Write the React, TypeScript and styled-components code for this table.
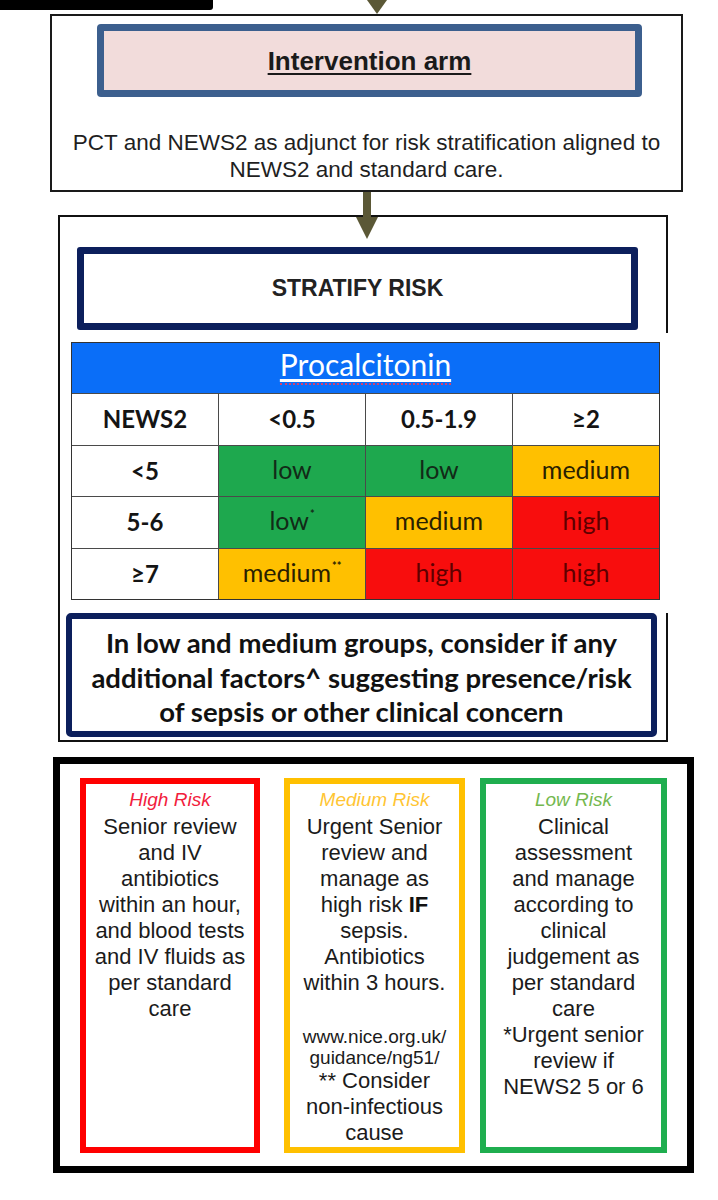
import React from 'react';
import styled, { createGlobalStyle } from 'styled-components';

const GlobalStyle = createGlobalStyle`
  html, body {
    margin: 0;
    padding: 0;
    background: #fff;
  }
  body {
    font-family: 'Liberation Sans', Arial, sans-serif;
    color: #1e1e1e;
  }
`;

const ARROW = '#5b5836';
const NAVY = '#0c1f5c';

type Tone = 'head' | 'white' | 'low' | 'medium' | 'high';

const toneBg: Record<Tone, string> = {
  head: '#0a6ef8',
  white: '#ffffff',
  low: '#1ea84e',
  medium: '#ffc000',
  high: '#f80d0d',
};

const toneInk: Record<Tone, string> = {
  head: '#ffffff',
  white: '#141414',
  low: '#122a17',
  medium: '#2a2100',
  high: '#5e0000',
};

const Page = styled.div`
  width: 718px;
  height: 1200px;
  overflow: hidden;
  background: #fff;
`;

const TopStrip = styled.div`
  display: flex;
  align-items: flex-start;
  height: 14px;
`;

const CutBar = styled.div`
  width: 213px;
  height: 10px;
  background: #000;
  border-bottom-right-radius: 3px;
`;

const TopArrow = styled.svg`
  display: block;
  margin-left: 154px;
`;

const IntroBox = styled.section`
  box-sizing: border-box;
  margin-left: 50px;
  width: 633px;
  height: 178px;
  border: 2px solid #1a1a1a;
  display: flex;
  flex-direction: column;
`;

const ArmHeader = styled.div`
  box-sizing: border-box;
  margin: 8px 39px 0 45px;
  height: 73px;
  border: 7px solid #3c5f8e;
  border-radius: 4px;
  background: #f2dcdb;
  display: flex;
  align-items: center;
  justify-content: center;
  padding-top: 2px;
  font-size: 26px;
  font-weight: 700;
  text-decoration: underline;
  text-underline-offset: 3px;
  color: #1a1a1a;
`;

const IntroText = styled.p`
  margin: 32px 0 0;
  font-size: 22.5px;
  line-height: 27px;
  text-align: center;
  white-space: nowrap;
  color: #1f1f1f;
`;

const Connector = styled.div`
  position: relative;
  height: 23px;
`;

const DownArrow = styled.svg`
  position: absolute;
  left: 356px;
  top: 0;
  z-index: 2;
`;

const Stage = styled.section`
  box-sizing: border-box;
  position: relative;
  margin-left: 58px;
  width: 610px;
  height: 527px;
  border: 2px solid #111;
  display: flex;
  flex-direction: column;
  align-items: flex-start;

  &::after {
    content: '';
    position: absolute;
    right: -2px;
    top: 116px;
    width: 2px;
    height: 280px;
    background: #fff;
  }
`;

const StratifyBox = styled.div`
  box-sizing: border-box;
  margin: 30px 0 0 17px;
  width: 561px;
  height: 83px;
  border: 7px solid ${NAVY};
  border-radius: 3px;
  display: flex;
  align-items: center;
  justify-content: center;
  font-size: 23px;
  font-weight: 700;
  color: #222;
`;

const RiskGrid = styled.div`
  box-sizing: border-box;
  margin: 12px 0 0 11px;
  width: 589px;
  display: grid;
  grid-template-columns: repeat(4, 1fr);
  grid-template-rows: 50px 51px 50px 51px 50px;
  gap: 1px;
  border: 1px solid #333;
  background: #4a4a4a;
  font-family: Lato, 'Open Sans', sans-serif;
`;

const Cell = styled.div<{ $tone: Tone; $bold?: boolean; $span?: boolean }>`
  display: flex;
  align-items: center;
  justify-content: center;
  padding-bottom: ${(p) => (p.$bold ? 2 : 5)}px;
  background: ${(p) => toneBg[p.$tone]};
  color: ${(p) => toneInk[p.$tone]};
  font-size: ${(p) => (p.$span ? '30px' : p.$bold ? '24px' : '25px')};
  font-weight: ${(p) => (p.$bold ? 700 : 400)};
  grid-column: ${(p) => (p.$span ? '1 / -1' : 'auto')};

  sup {
    font-size: 11px;
    font-weight: 700;
    margin-left: 1px;
    align-self: flex-start;
    margin-top: 10px;
  }
`;

const HeadLabel = styled.span`
  text-decoration: underline;
  text-decoration-color: #fff;
  text-underline-offset: 3px;
  padding-bottom: 1px;
  border-bottom: 2px dotted #d4406e;
`;

const NoteBox = styled.div`
  box-sizing: border-box;
  margin: 13px 0 0 6px;
  width: 591px;
  height: 124px;
  border: 6px solid ${NAVY};
  border-radius: 5px;
  padding-top: 7px;
  text-align: center;
  white-space: nowrap;
  font-family: Lato, 'Open Sans', sans-serif;
  font-weight: 700;
  font-size: 27.5px;
  line-height: 34.5px;
  color: #111;
`;

const ActionBox = styled.section`
  box-sizing: border-box;
  margin: 15px 0 0 53px;
  width: 641px;
  height: 416px;
  border: 7px solid #000;
  padding: 14px 20px 0;
  display: flex;
  align-items: flex-start;
`;

const Card = styled.div<{ $color: string; $w: number; $ml: number }>`
  box-sizing: border-box;
  width: ${(p) => p.$w}px;
  height: 375px;
  margin-left: ${(p) => p.$ml}px;
  border: 6px solid ${(p) => p.$color};
  padding-top: 4px;
  text-align: center;
  white-space: nowrap;
`;

const CardTitle = styled.div<{ $color: string }>`
  font-size: 19px;
  font-style: italic;
  line-height: 24px;
  color: ${(p) => p.$color};
`;

const CardBody = styled.div<{ $gap?: number }>`
  margin-top: ${(p) => p.$gap ?? 2}px;
  font-size: 22px;
  line-height: 26px;
  color: #1b1b1b;

  b {
    font-weight: 700;
    color: #111;
  }
`;

const LinkLines = styled.div`
  margin-top: 30px;
  font-size: 19px;
  line-height: 21px;
  color: #1b1b1b;
`;

const rows: { label: string; cells: { tone: Tone; text: string; mark?: string }[] }[] = [
  {
    label: '<5',
    cells: [
      { tone: 'low', text: 'low' },
      { tone: 'low', text: 'low' },
      { tone: 'medium', text: 'medium' },
    ],
  },
  {
    label: '5-6',
    cells: [
      { tone: 'low', text: 'low', mark: '*' },
      { tone: 'medium', text: 'medium' },
      { tone: 'high', text: 'high' },
    ],
  },
  {
    label: '≥7',
    cells: [
      { tone: 'medium', text: 'medium', mark: '**' },
      { tone: 'high', text: 'high' },
      { tone: 'high', text: 'high' },
    ],
  },
];

export default function App() {
  return (
    <Page>
      <GlobalStyle />
      <TopStrip>
        <CutBar />
        <TopArrow width="20" height="14" viewBox="0 0 20 14">
          <polygon points="0,0 20,0 10,14" fill={ARROW} />
        </TopArrow>
      </TopStrip>

      <IntroBox>
        <ArmHeader>Intervention arm</ArmHeader>
        <IntroText>
          PCT and NEWS2 as adjunct for risk stratification aligned to
          <br />
          NEWS2 and standard care.
        </IntroText>
      </IntroBox>

      <Connector>
        <DownArrow width="22" height="47" viewBox="0 0 22 47">
          <rect x="7" y="0" width="8" height="26" fill={ARROW} />
          <polygon points="0,25 22,25 11,47" fill={ARROW} />
        </DownArrow>
      </Connector>

      <Stage>
        <StratifyBox>STRATIFY RISK</StratifyBox>

        <RiskGrid>
          <Cell $tone="head" $span>
            <HeadLabel>Procalcitonin</HeadLabel>
          </Cell>
          <Cell $tone="white" $bold>NEWS2</Cell>
          <Cell $tone="white" $bold>&lt;0.5</Cell>
          <Cell $tone="white" $bold>0.5-1.9</Cell>
          <Cell $tone="white" $bold>≥2</Cell>
          {rows.map((row) => (
            <React.Fragment key={row.label}>
              <Cell $tone="white" $bold>{row.label}</Cell>
              {row.cells.map((c, i) => (
                <Cell key={i} $tone={c.tone}>
                  {c.text}
                  {c.mark && <sup>{c.mark}</sup>}
                </Cell>
              ))}
            </React.Fragment>
          ))}
        </RiskGrid>

        <NoteBox>
          In low and medium groups, consider if any
          <br />
          additional factors^ suggesting presence/risk
          <br />
          of sepsis or other clinical concern
        </NoteBox>
      </Stage>

      <ActionBox>
        <Card $color="#ff0000" $w={180} $ml={0}>
          <CardTitle $color="#f2203c">High Risk</CardTitle>
          <CardBody>
            Senior review
            <br />
            and IV
            <br />
            antibiotics
            <br />
            within an hour,
            <br />
            and blood tests
            <br />
            and IV fluids as
            <br />
            per standard
            <br />
            care
          </CardBody>
        </Card>

        <Card $color="#ffc000" $w={181} $ml={24}>
          <CardTitle $color="#ffc533">Medium Risk</CardTitle>
          <CardBody>
            Urgent Senior
            <br />
            review and
            <br />
            manage as
            <br />
            high risk <b>IF</b>
            <br />
            sepsis.
            <br />
            Antibiotics
            <br />
            within 3 hours.
          </CardBody>
          <LinkLines>
            www.nice.org.uk/
            <br />
            guidance/ng51/
          </LinkLines>
          <CardBody $gap={0}>
            ** Consider
            <br />
            non-infectious
            <br />
            cause
          </CardBody>
        </Card>

        <Card $color="#1fae4f" $w={187} $ml={15}>
          <CardTitle $color="#74b84e">Low Risk</CardTitle>
          <CardBody>
            Clinical
            <br />
            assessment
            <br />
            and manage
            <br />
            according to
            <br />
            clinical
            <br />
            judgement as
            <br />
            per standard
            <br />
            care
            <br />
            *Urgent senior
            <br />
            review if
            <br />
            NEWS2 5 or 6
          </CardBody>
        </Card>
      </ActionBox>
    </Page>
  );
}
